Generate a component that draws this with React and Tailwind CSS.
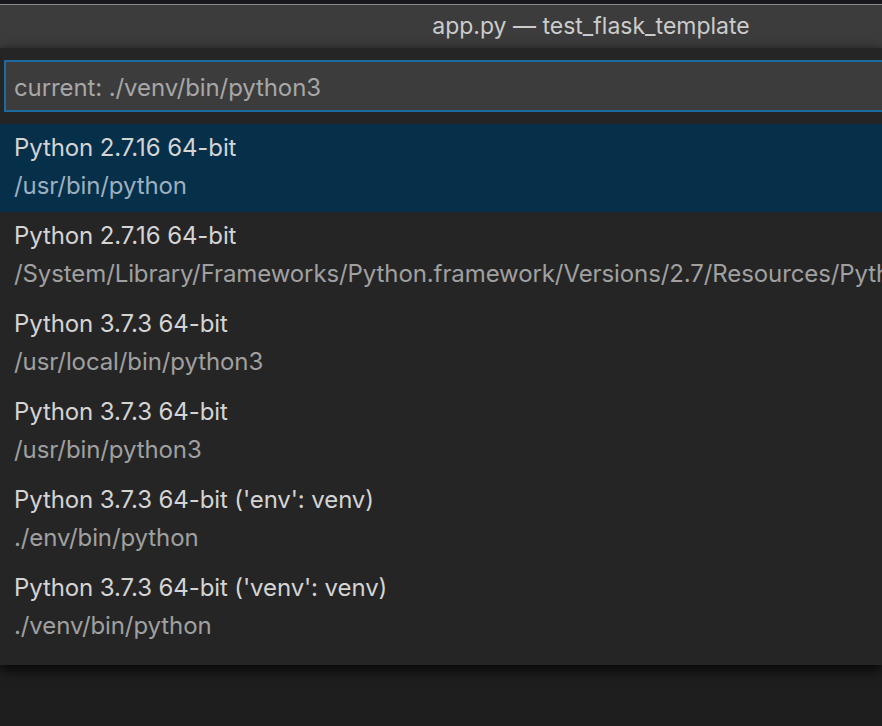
import React from "react";

const items = [
  { t: "Python 2.7.16 64-bit", d: "/usr/bin/python", sel: true },
  { t: "Python 2.7.16 64-bit", d: "/System/Library/Frameworks/Python.framework/Versions/2.7/Resources/Python.app/Contents/MacOS/Python" },
  { t: "Python 3.7.3 64-bit", d: "/usr/local/bin/python3" },
  { t: "Python 3.7.3 64-bit", d: "/usr/bin/python3" },
  { t: "Python 3.7.3 64-bit ('env': venv)", d: "./env/bin/python" },
  { t: "Python 3.7.3 64-bit ('venv': venv)", d: "./venv/bin/python" },
];

export default function App() {
  return (
    <div
      className="w-[882px] h-[726px] overflow-hidden bg-[#1e1e1e] flex flex-col"
      style={{ fontFamily: "Inter, 'Noto Sans', sans-serif" }}
    >
      <div className="h-[4px] bg-[#16181d] shrink-0" />
      <div className="h-[1px] bg-[#8a8a8a] shrink-0" />
      <div className="h-[43px] bg-[#3c3c3c] shrink-0 flex items-center justify-center pl-[300px]">
        <span className="text-[23px] text-[#cccccc] whitespace-nowrap">app.py — test_flask_template</span>
      </div>
      <div className="relative">
        <div className="bg-[#252526] pt-[12px] pb-[13px] shadow-[0_4px_12px_rgba(0,0,0,0.9)] relative z-10">
          <div className="ml-[4px] -mr-[20px] h-[52px] border-2 border-[#1c6aa0] bg-[#3c3c3c] flex items-center px-[8px] pt-[3px]">
            <span className="text-[24px] text-[#a7a7a7] tracking-[-0.1px] whitespace-nowrap">current: ./venv/bin/python3</span>
          </div>
          <div className="mt-[12px] flex flex-col">
            {items.map((it, i) => (
              <div
                key={i}
                className={`h-[88px] px-[14px] pt-[5px] flex flex-col whitespace-nowrap overflow-hidden ${it.sel ? "bg-[#062f4a]" : ""}`}
              >
                <div className="text-[24px] leading-[38px] tracking-[-0.1px] text-[#d4d4d4]">{it.t}</div>
                <div className={`text-[24px] leading-[38px] tracking-[-0.1px] ${it.sel ? "text-[#9cb0bf]" : "text-[#a0a0a0]"}`}>{it.d}</div>
              </div>
            ))}
          </div>
        </div>
      </div>
    </div>
  );
}
